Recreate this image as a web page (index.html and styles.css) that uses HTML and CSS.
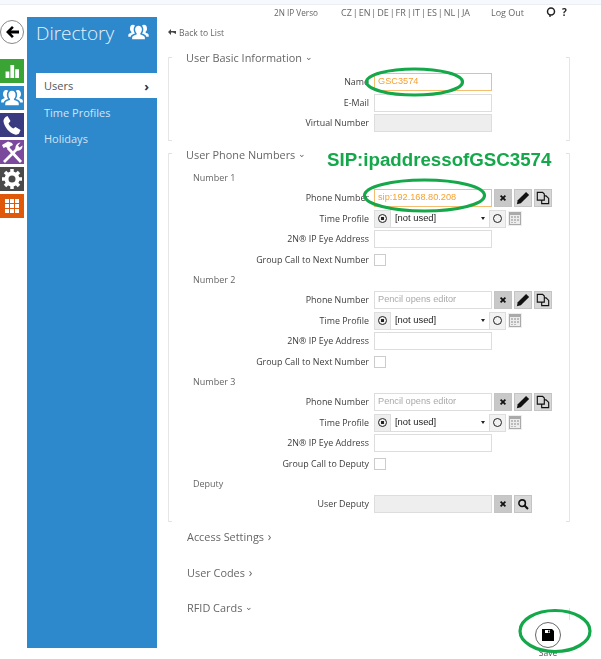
FILE: index.html
```html
<!DOCTYPE html>
<html lang="en">
<head>
<meta charset="utf-8">
<title>Directory</title>
<link rel="stylesheet" href="styles.css">
</head>
<body>
<svg class="defs" width="0" height="0">
  <defs>
    <symbol id="users" viewBox="0 0 24 20"><path fill="currentColor" d="M12 2c2.600 0 4 2 4 4.600 0 1.800-.8 3.400-1.800 4.300v1.400c2.500.8 5.300 1.600 5.300 3.700v2H4.500v-2c0-2.100 2.800-2.900 5.300-3.700v-1.400C8.800 10 8 8.400 8 6.600 8 4 9.400 2 12 2z"/><path fill="currentColor" d="M5.500 1c1 0 1.800.3 2.400 1C6.800 3.200 6.300 4.800 6.300 6.600c0 1.600.5 3.200 1.500 4.400v.2c-2.300.7-4.600 1.800-5 3.800H0v-2c0-1.600 2-2.200 3.600-2.800V9.200C2.600 8.400 2 7 2 5.500 2 3 3.300 1 5.500 1zM18.500 1c2.200 0 3.500 2 3.500 4.500 0 1.500-.6 2.900-1.600 3.700v1c1.600.6 3.600 1.200 3.600 2.800v2h-2.800c-.4-2-2.700-3.100-5-3.800V11c1-1.200 1.500-2.800 1.500-4.400 0-1.800-.5-3.400-1.600-4.600.6-.7 1.400-1 2.400-1z"/></symbol>
    <symbol id="pencil" viewBox="0 0 16 16"><path fill="currentColor" d="M11.500 1l3.500 3.500-9.500 9.500L1 15l1-4.500z"/></symbol>
    <symbol id="copy" viewBox="0 0 16 16"><path fill="none" stroke="currentColor" stroke-width="1.300" d="M1.500 1.500h6l2 2v7h-8zM9.500 5.500h2l3 3v6h-8v-4"/></symbol>
    <symbol id="cross" viewBox="0 0 10 10"><path stroke="currentColor" stroke-width="2.200" d="M2 2l6 6M8 2l-6 6"/></symbol>
    <symbol id="search" viewBox="0 0 14 14"><circle cx="6" cy="6" r="3.800" fill="none" stroke="currentColor" stroke-width="1.800"/><path stroke="currentColor" stroke-width="2.400" d="M8.800 8.800l4 4"/></symbol>
    <symbol id="cal" viewBox="0 0 14 15"><path fill="#aaa" d="M1 1h12v13H1z"/><path fill="#ececec" d="M2 4h10v9H2z"/><path fill="#bbb" d="M3 5h2v2H3zM6 5h2v2H6zM9 5h2v2H9zM3 8h2v2H3zM6 8h2v2H6zM9 8h2v2H9zM3 11h2v1H3zM6 11h2v1H6z"/></symbol>
  </defs>
</svg>

<div class="topstrip"></div>
<div class="page">
  <nav class="rail">
    <div class="back">
      <svg width="14" height="12" viewBox="0 0 14 12"><path fill="#000" d="M7 0l1.800 1.800L6 4.500h8v3H6l2.800 2.700L7 12 1 6z"/></svg>
    </div>
    <div class="tile tile-green">
      <svg width="16" height="15" viewBox="0 0 14 14"><path fill="#fff" d="M1 7h3.500v6H1zM5.500 1H9v12H5.500zM10 5h3.500v8H10z"/></svg>
    </div>
    <div class="tile tile-blue"><svg class="ico-users" width="22" height="18"><use href="#users"/></svg></div>
    <div class="tile tile-navy">
      <svg width="18" height="19" viewBox="0 0 18 19"><path fill="#fff" d="M4.500 0l3 5-2 2.500c.8 2 2.500 3.800 4.800 5L12.500 11l5 3-1.500 3.500c-1 1-2.500 1.500-4 1C6.500 17 1.500 11.500.5 5.500.2 3.500 1.500 1 4.500 0z"/></svg>
    </div>
    <div class="tile tile-purple">
      <svg width="23" height="23" viewBox="0 0 23 23"><path stroke="#fff" stroke-width="2.800" d="M7 7l13 14M16 8L3 21"/><path fill="#fff" d="M1 4l6-3.500 4 1.500 1 2-3 1.500-1.500 3L5 6 2.500 7zM14.500 8c-.5-3 1.500-6 5-6.500L17 4.500l1.500 2 3-2c.3 3.500-3 6-5.500 5z"/></svg>
    </div>
    <div class="tile tile-grey">
      <svg width="20" height="20" viewBox="0 0 20 20"><circle cx="10" cy="10" r="5.500" fill="none" stroke="#fff" stroke-width="4"/><path stroke="#fff" stroke-width="3.500" d="M10 0v4M10 16v4M0 10h4M16 10h4M3 3l2.500 2.500M14.500 14.500L17 17M17 3l-2.500 2.500M5.500 14.500L3 17"/></svg>
    </div>
    <div class="tile tile-orange">
      <svg width="14" height="14" viewBox="0 0 14 14"><path fill="#fff" d="M0 0h14v14H0z"/><path stroke="#e0590a" d="M4.500 0v14M9.500 0v14M0 4.500h14M0 9.500h14"/></svg>
    </div>
  </nav>

  <aside class="sidebar">
    <div class="side-head">
      <span class="side-title">Directory</span>
      <svg class="side-ico" width="21" height="17"><use href="#users"/></svg>
    </div>
    <ul class="side-menu">
      <li class="side-item active"><span>Users</span><span class="chev">›</span></li>
      <li class="side-item">Time Profiles</li>
      <li class="side-item">Holidays</li>
    </ul>
  </aside>

  <main class="main">
    <header class="topnav">
      <span class="tn-device">2N IP Verso</span>
      <span class="tn-langs">CZ | EN | DE | FR | IT | ES | NL | JA</span>
      <span class="tn-logout">Log Out</span>
      <span class="tn-icons">
        <svg width="10" height="10" viewBox="0 0 10 10"><circle cx="5" cy="4.500" r="3.500" fill="none" stroke="#222" stroke-width="1.500"/><path stroke="#222" stroke-width="1.300" d="M4 8v2"/></svg>
        <b>?</b>
      </span>
    </header>
    <div class="backlink">
      <svg width="8" height="6" viewBox="0 0 8 6"><path fill="#444" d="M3 0v2h5v3L5 3.500H3V6L0 3z"/></svg>
      <span>Back to List</span>
    </div>

    <section class="frame frame-basic">
      <h2 class="sec-head">User Basic Information <span class="caret">⌄</span></h2>
      <div class="row"><label>Name</label><div class="field input focus">GSC3574</div></div>
      <div class="row"><label>E-Mail</label><div class="field input"></div></div>
      <div class="row"><label>Virtual Number</label><div class="field input disabled"></div></div>
    </section>

    <section class="frame frame-phones">
      <h2 class="sec-head">User Phone Numbers <span class="caret">⌄</span></h2>

      <h3 class="group">Number 1</h3>
      <div class="row"><label>Phone Number</label><div class="field input focus">sip:192.168.80.208</div>
        <button class="btn dark"><svg width="8" height="8"><use href="#cross"/></svg></button>
        <button class="btn"><svg width="14" height="14"><use href="#pencil"/></svg></button>
        <button class="btn"><svg width="14" height="14"><use href="#copy"/></svg></button></div>
      <div class="row"><label>Time Profile</label>
        <div class="profile"><span class="radio on"></span><span class="select">[not used]<i class="arrow"></i></span><span class="radio off"></span><svg class="cal" width="14" height="15"><use href="#cal"/></svg></div></div>
      <div class="row"><label>2N® IP Eye Address</label><div class="field input"></div></div>
      <div class="row"><label>Group Call to Next Number</label><div class="check"></div></div>

      <h3 class="group">Number 2</h3>
      <div class="row"><label>Phone Number</label><div class="field input ph">Pencil opens editor</div>
        <button class="btn dark"><svg width="8" height="8"><use href="#cross"/></svg></button>
        <button class="btn"><svg width="14" height="14"><use href="#pencil"/></svg></button>
        <button class="btn"><svg width="14" height="14"><use href="#copy"/></svg></button></div>
      <div class="row"><label>Time Profile</label>
        <div class="profile"><span class="radio on"></span><span class="select">[not used]<i class="arrow"></i></span><span class="radio off"></span><svg class="cal" width="14" height="15"><use href="#cal"/></svg></div></div>
      <div class="row"><label>2N® IP Eye Address</label><div class="field input"></div></div>
      <div class="row"><label>Group Call to Next Number</label><div class="check"></div></div>

      <h3 class="group">Number 3</h3>
      <div class="row"><label>Phone Number</label><div class="field input ph">Pencil opens editor</div>
        <button class="btn dark"><svg width="8" height="8"><use href="#cross"/></svg></button>
        <button class="btn"><svg width="14" height="14"><use href="#pencil"/></svg></button>
        <button class="btn"><svg width="14" height="14"><use href="#copy"/></svg></button></div>
      <div class="row"><label>Time Profile</label>
        <div class="profile"><span class="radio on"></span><span class="select">[not used]<i class="arrow"></i></span><span class="radio off"></span><svg class="cal" width="14" height="15"><use href="#cal"/></svg></div></div>
      <div class="row"><label>2N® IP Eye Address</label><div class="field input"></div></div>
      <div class="row"><label>Group Call to Deputy</label><div class="check"></div></div>

      <h3 class="group">Deputy</h3>
      <div class="row"><label>User Deputy</label><div class="field input disabled"></div>
        <button class="btn dark"><svg width="8" height="8"><use href="#cross"/></svg></button>
        <button class="btn"><svg width="12" height="12"><use href="#search"/></svg></button></div>
    </section>

    <div class="collapsed">
      <h2 class="sec-head">Access Settings <span class="caret-r">›</span></h2>
      <h2 class="sec-head">User Codes <span class="caret-r">›</span></h2>
      <h2 class="sec-head">RFID Cards <span class="caret">⌄</span></h2>
    </div>
    <div class="rfid-tick"></div>
  </main>
</div>

<div class="save">
  <div class="save-btn">
    <svg width="12" height="12" viewBox="0 0 12 12"><path fill="#000" d="M0 0h10l2 2v10H0z"/><path fill="#fff" d="M3 1h5v3H3z"/><path fill="#000" d="M6 1.500h1.500v2H6z"/></svg>
  </div>
  <span class="save-label">Save</span>
</div>

<svg class="marks" width="601" height="659" viewBox="0 0 601 659">
  <ellipse cx="414.500" cy="82" rx="48" ry="13"/>
  <ellipse cx="424.500" cy="195.500" rx="60" ry="15.500"/>
  <ellipse cx="555" cy="631" rx="35" ry="20.500"/>
</svg>
<div class="sip-note">SIP:ipaddressofGSC3574</div>
</body>
</html>
```

FILE: styles.css
```css
* { box-sizing: border-box; }
html, body { margin: 0; padding: 0; }
body {
  width: 601px;
  height: 659px;
  overflow: hidden;
  position: relative;
  background: #fff;
  font-family: "Open Sans", "Liberation Sans", sans-serif;
  color: #444;
  filter: blur(0.3px);
}
.defs { position: absolute; }
.topstrip {
  height: 5px;
  background: #f6f9fe;
  border-bottom: 1px solid #eceef2;
}
.page {
  display: flex;
  align-items: flex-start;
  height: 654px;
}

/* icon rail */
.rail {
  width: 27px;
  flex: none;
  display: flex;
  flex-direction: column;
}
.back {
  width: 24px;
  height: 24px;
  margin-top: 15px;
  margin-bottom: 15px;
  border: 1px solid #888;
  border-radius: 50%;
  display: flex;
  align-items: center;
  justify-content: center;
}
.tile {
  width: 24px;
  height: 24px;
  margin-bottom: 3px;
  display: flex;
  align-items: center;
  justify-content: center;
  color: #fff;
}
.tile-green { background: #3aa535; }
.tile-blue { background: #2e88cc; }
.tile-navy { background: #3a3a80; }
.tile-purple { background: #7b4a9c; }
.tile-grey { background: #4a4a4a; }
.tile-orange { background: #e0590a; }

/* blue sidebar */
.sidebar {
  width: 130px;
  flex: none;
  height: 631px;
  margin-top: 12px;
  background: #2e88cc;
  color: #fff;
}
.side-head {
  display: flex;
  justify-content: space-between;
  align-items: center;
  padding: 0 8px 0 9px;
  height: 31px;
}
.side-title {
  font-size: 19px;
  font-weight: 300;
  color: #e6f2fb;
}
.side-ico { color: #fff; }
.side-menu {
  list-style: none;
  margin: 25px 0 0 9px;
  padding: 0;
}
.side-item {
  height: 26.500px;
  display: flex;
  align-items: center;
  justify-content: space-between;
  padding: 0 8px;
  font-size: 11px;
  color: #cfe5f6;
}
.side-item.active {
  height: 25px;
  margin-bottom: 1px;
  background: #fff;
  color: #555;
}
.chev { font-size: 13px; font-weight: 700; color: #333; }

/* main column */
.main {
  flex: 1;
  min-width: 0;
  position: relative;
  padding-left: 11px;
  padding-right: 31px;
}
.topnav {
  height: 14px;
  font-size: 9px;
  color: #666;
  display: flex;
  align-items: center;
  padding-left: 106px;
}
.tn-device { width: 67px; flex: none; font-size: 8.200px; }
.tn-langs { width: 150px; flex: none; word-spacing: -1.400px; }
.tn-logout { width: 55px; flex: none; }
.tn-icons { display: flex; align-items: center; gap: 6px; font-size: 10px; color: #222; }
.backlink {
  display: flex;
  align-items: center;
  gap: 3px;
  height: 12px;
  margin-top: 7px;
  font-size: 8.500px;
  color: #666;
}

.frame {
  display: flow-root;
  position: relative;
  border-left: 1px solid #e6e6e6;
  border-right: 1px solid #e6e6e6;
}
.frame::before, .frame::after {
  content: "";
  position: absolute;
  left: 0;
  right: 0;
  height: 1px;
  background: linear-gradient(to right, #e2e2e2 3px, transparent 3px, transparent calc(100% - 3px), #e2e2e2 calc(100% - 3px));
}
.frame::before { top: 0; }
.frame::after { bottom: 0; }
.frame-basic {
  height: 84px;
  margin-top: 19px;
}
.frame-phones {
  height: 369px;
  margin-top: 12px;
}
.sec-head {
  margin: 0;
  padding-left: 17px;
  font-size: 10.900px;
  font-weight: 400;
  color: #666;
  line-height: 14px;
  white-space: nowrap;
}
.frame-basic .sec-head { height: 21px; margin-top: -6px; }
.frame-phones .sec-head { height: 20px; margin-top: -5px; }
.caret { font-size: 9px; position: relative; top: -2px; }
.caret-r { font-size: 12px; margin-left: 1px; }
.group {
  margin: 0;
  padding-left: 24px;
  height: 20px;
  line-height: 20px;
  font-size: 9px;
  font-weight: 400;
  color: #666;
}
.row {
  display: flex;
  align-items: center;
  height: 20.500px;
}
.row label {
  width: 200px;
  flex: none;
  margin-top: -1px;
  text-align: right;
  font-size: 8.900px;
  color: #3c3c3c;
  white-space: nowrap;
}
.field {
  width: 118px;
  height: 18px;
  flex: none;
  margin-left: 5px;
  margin-right: 2px;
  border: 1px solid #ddd;
  background: #fff;
  padding: 0 3px;
  font-family: "Liberation Sans", Arial, sans-serif;
  font-size: 9.200px;
  line-height: 15px;
}
.input.focus { border-color: #f5bd70; color: #f5a030; }
.input.disabled { background: #eee; }
.input.ph { color: #aaa; }
.btn {
  width: 18px;
  height: 18px;
  flex: none;
  padding: 0;
  margin-right: 2px;
  border: 1px solid #c4c4c4;
  background: #d8d8d8;
  color: #111;
  display: flex;
  align-items: center;
  justify-content: center;
}
.btn.dark { background: #c8c8c8; }
.profile {
  display: flex;
  align-items: center;
  margin-left: 5px;
  height: 18px;
}
.radio {
  width: 17px;
  height: 18px;
  background: #eee;
  border: 1px solid #ddd;
  display: flex;
  align-items: center;
  justify-content: center;
  flex: none;
}
.radio::after {
  content: "";
  display: block;
  border-radius: 50%;
  border: 1px solid #222;
  width: 7px;
  height: 7px;
}
.radio.on::after { background: radial-gradient(circle, #222 0 1.500px, #eee 2px); }
.radio.off { background: #f2f2f2; }
.select {
  width: 98px;
  height: 18px;
  border-bottom: 1px solid #ddd;
  background: #fff;
  padding-left: 4px;
  font-family: "Liberation Sans", Arial, sans-serif;
  font-size: 9.400px;
  line-height: 15px;
  color: #222;
  display: flex;
  justify-content: space-between;
  align-items: flex-start;
  flex: none;
}
.arrow {
  width: 0;
  height: 0;
  margin: 7px 4px 0 0;
  border-left: 2px solid transparent;
  border-right: 2px solid transparent;
  border-top: 3px solid #222;
}
.cal { margin-left: 2px; background: #eee; }
.check {
  width: 12px;
  height: 12px;
  margin-left: 5px;
  border: 1px solid #ccc;
  background: #fff;
}

.collapsed {
  margin-top: 8px;
}
.collapsed .sec-head {
  height: 35.500px;
  padding-left: 19px;
}
.rfid-tick {
  position: absolute;
  left: 412px;
  top: 603px;
  width: 1px;
  height: 12px;
  background: #e2e2e2;
}

/* save */
.save {
  position: absolute;
  left: 535px;
  top: 622px;
  width: 26px;
  display: flex;
  flex-direction: column;
  align-items: center;
}
.save-btn {
  width: 26px;
  height: 26px;
  border: 1px solid #666;
  border-radius: 50%;
  background: #fff;
  display: flex;
  align-items: center;
  justify-content: center;
}
.save-label {
  font-size: 8.500px;
  color: #555;
  line-height: 10px;
}

/* annotations on top of the screenshot */
.marks {
  position: absolute;
  left: 0;
  top: 0;
  pointer-events: none;
}
.marks ellipse {
  fill: none;
  stroke: #14a84a;
  stroke-width: 3.200;
}
.sip-note {
  position: absolute;
  left: 327px;
  top: 149px;
  font-family: "Liberation Sans", Arial, sans-serif;
  font-size: 18.700px;
  font-weight: 700;
  line-height: 21px;
  color: #14a84a;
  white-space: nowrap;
}
```
